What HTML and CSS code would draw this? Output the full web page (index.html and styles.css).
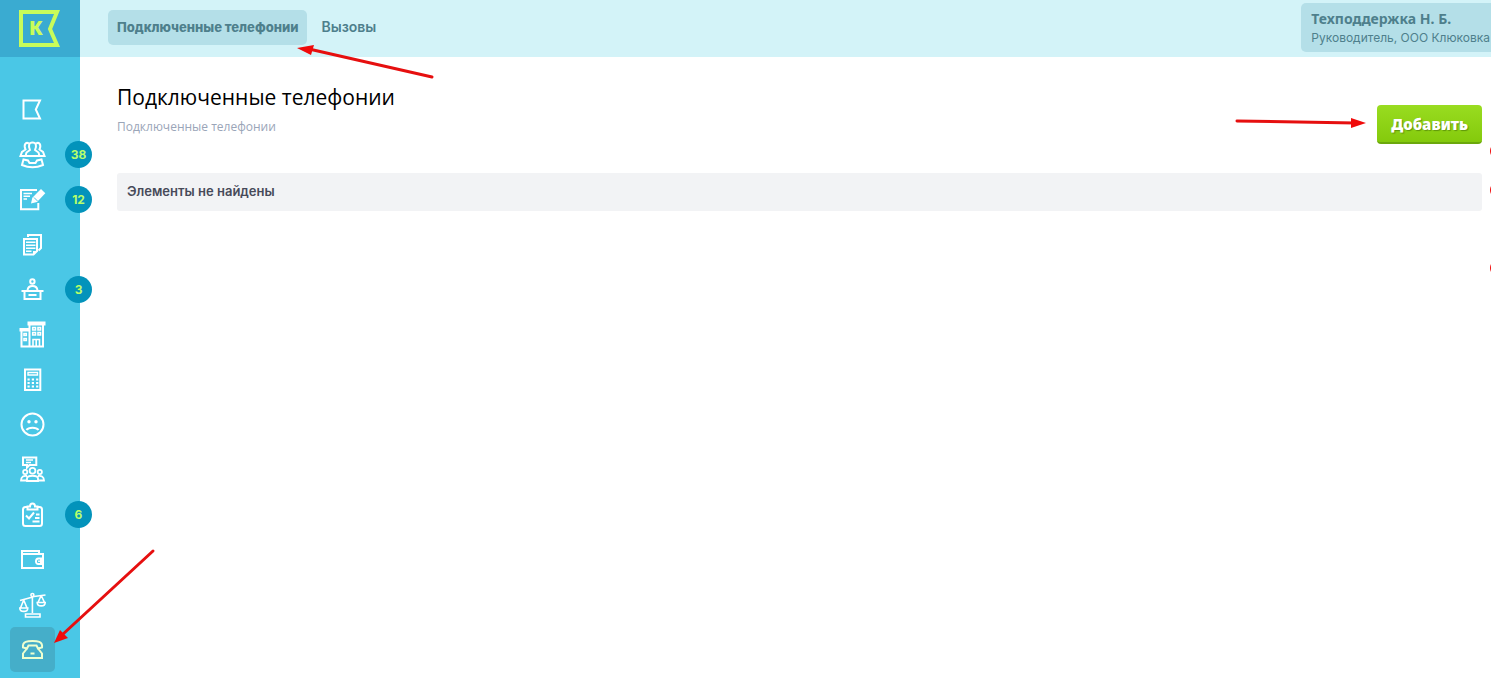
FILE: index.html
```
<!DOCTYPE html>
<html lang="ru">
<head>
  <meta charset="UTF-8" />
  <meta name="viewport" content="width=device-width, initial-scale=1.0"/>
  <title>Подключенные телефонии</title>
  <link rel="stylesheet" href="styles.css">
</head>
<body>
  <aside class="sidebar">
    <a href="#" class="logo" aria-label="Главная">
      <svg width="42" height="38" viewBox="0 0 42 38">
        <path d="M2 2H38L31 19L38 35H2Z" fill="none" stroke="#c8fc5a" stroke-width="4"/>
        <text x="10" y="25" class="logo-letter">К</text>
      </svg>
    </a>
    <nav class="menu">
      <a href="#" class="menu-item" aria-label="Дела">
        <svg viewBox="0 0 45 45"><path d="M13.5 13.5H30L25.8 22.5L30 31.5H13.5Z"/></svg>
      </a>
      <a href="#" class="menu-item" aria-label="Клиенты">
        <svg viewBox="0 0 45 45">
          <path d="M20 18C18 13 19 10.5 22.500 10.5S27 13 25 18L28.5 20.5L29.5 24H15.5L16.5 20.5Z"/>
          <path d="M19 11.5C15.5 9.5 13.5 13 15.5 17.5L12 20L10.5 24H16M26 11.5C29.5 9.5 31.5 13 29.5 17.5L33 20L34.5 24H29"/>
          <path d="M13.500 27.5L18 28.5L19.500 31H25.5L27 28.5L31.5 27.5L33 33C26 36 19 36 12 33Z"/>
        </svg>
        <span class="badge">38</span>
      </a>
      <a href="#" class="menu-item" aria-label="Заявки">
        <svg viewBox="0 0 45 45">
          <path d="M27 13H11V32.3H28.3V26"/>
          <path d="M13.5 16.5H22M13.5 19.3H20M13.5 22H17" stroke-width="1.4"/>
          <path class="solid" d="M21 26.5L22.3 20.8L31 12L35.3 16.2L27 25Z"/>
          <path d="M24 20.5L27.5 24" stroke="#4ac7e6" stroke-width="1"/>
        </svg>
        <span class="badge">12</span>
      </a>
      <a href="#" class="menu-item" aria-label="Документы">
        <svg viewBox="0 0 45 45">
          <path d="M18 15V13H31V26L28.5 28.5"/>
          <path d="M14 17H27V29L23.5 32.5H14Z"/>
          <path d="M16 20.2H25.5M16 23.2H25.5M16 26.2H25.5M16 29.2H21.5" stroke-width="1.4"/>
          <path class="solid" d="M23 33V29H27.5Z"/>
        </svg>
      </a>
      <a href="#" class="menu-item" aria-label="Приём">
        <svg viewBox="0 0 45 45">
          <circle cx="22.4" cy="14.5" r="2.2"/>
          <path d="M17.5 23.5C18 17.5 27 17.5 27.5 23.5M11.5 24H33.5M14.5 24V32H30.5V24M18.5 28H26.5"/>
        </svg>
        <span class="badge">3</span>
      </a>
      <a href="#" class="menu-item" aria-label="Организации">
        <svg viewBox="0 0 45 45">
          <path d="M18.5 10.5H34.5V12.5H18.5ZM19.5 12.5V34.5H33V12.5M10.5 17H19V18.5H10.5ZM11.5 18.5V34.5H20"/>
          <path d="M22.7 15.5H25.5V18H22.7ZM28 15.5H30.5V18H28ZM22.7 20.5H25.5V23H22.7ZM28 20.5H30.5V23H28ZM14 21.5H16.3V23.5H14ZM14 26.5H16.3V28.5H14ZM23 34V27.5H29.5V34M26.2 27.5V34" stroke-width="1.6"/>
        </svg>
      </a>
      <a href="#" class="menu-item" aria-label="Калькулятор">
        <svg viewBox="0 0 45 45">
          <path d="M15 12.5H30.3V33H15Z"/>
          <path d="M18 15.5H27.5V18H18Z" stroke-width="1.4"/>
          <path d="M17.5 22.5H28.5M17.5 26H28.5M17.5 29.5H28.5" stroke-dasharray="2.2 2.1"/>
        </svg>
      </a>
      <a href="#" class="menu-item" aria-label="Жалобы">
        <svg viewBox="0 0 45 45">
          <circle cx="22.5" cy="22.5" r="11"/>
          <circle class="solid" cx="19" cy="19.8" r="1.7"/>
          <circle class="solid" cx="26" cy="19.8" r="1.7"/>
          <path d="M16.5 28C18.5 25 26.5 25 28.5 28"/>
        </svg>
      </a>
      <a href="#" class="menu-item" aria-label="Собрания">
        <svg viewBox="0 0 45 45">
          <path d="M13 10.5H26.3V18H19.5L17 20.5V18H13Z"/>
          <path d="M16 13H23M16 15.5H21" stroke-width="1.4"/>
          <g stroke-width="1.8">
            <circle cx="22.5" cy="23.8" r="2.9"/>
            <circle cx="15.2" cy="25" r="2.1"/>
            <circle cx="29.8" cy="25" r="2.1"/>
            <path d="M17 34V31.5C17 27.8 28 27.8 28 31.5V34ZM17 29C14 28.5 11 29.5 11 33.5H17M28 29C31 28.5 34 29.5 34 33.5H28"/>
          </g>
        </svg>
      </a>
      <a href="#" class="menu-item" aria-label="Задачи">
        <svg viewBox="0 0 45 45">
          <path d="M17 15H15.5Q13 15 13 17.5V31.5Q13 34 15.5 34H29.5Q32 34 32 31.5V17.5Q32 15 29.5 15H28"/>
          <path d="M17.5 17.5V14.5H20C20 10.5 25 10.5 25 14.5H27.5V17.5Z"/>
          <path d="M16 23.5L19 26.5L24 20.5M26 22.5H29.5M25 26H29.5M22.5 29.5H29.5"/>
        </svg>
        <span class="badge">6</span>
      </a>
      <a href="#" class="menu-item" aria-label="Кошелёк">
        <svg viewBox="0 0 45 45">
          <path d="M29 16.8V14H12V31H33V17H12M33 21.5H28.5Q26 21.5 26 24.3T28.5 27H33M31 22V27"/>
          <circle class="solid" cx="29" cy="24.3" r="1"/>
        </svg>
      </a>
      <a href="#" class="menu-item" aria-label="Суд">
        <svg viewBox="0 0 45 45">
          <g stroke-width="1.6">
            <circle cx="22.4" cy="13" r="1.5"/>
            <path d="M22.4 14.5V31M10 18.5L21 15.5L24 14.5L35.5 13M15.5 32H30V35H15.5Z"/>
            <path d="M13.7 18L10.5 26H17L13.7 18M9.8 26H17.8C17.8 30.5 9.8 30.5 9.8 26ZM31.2 13.5L28 20.5H34.5L31.2 13.5M27.2 20.5H35.2C35.2 25 27.2 25 27.2 20.5Z"/>
          </g>
        </svg>
      </a>
      <a href="#" class="menu-item active" aria-label="Телефония">
        <svg viewBox="0 0 45 45">
          <path d="M13 20.5C12 14 18 14 22.5 14S33 14 32 20.5L28 21.5L26.5 18.5H18.5L17 21.5ZM17 21.5L13 26.5V31H32V26.5L28 21.5M20.5 26.5H24.5"/>
        </svg>
      </a>
    </nav>
  </aside>

  <div class="main">
    <header class="topbar">
      <nav class="tabs">
        <a href="#" class="tab active">Подключенные телефонии</a>
        <a href="#" class="tab">Вызовы</a>
      </nav>
      <a href="#" class="profile">
        <strong class="profile-name">Техподдержка Н. Б.</strong>
        <span class="profile-role">Руководитель, ООО Клюковка</span>
      </a>
    </header>

    <main class="content">
      <div class="page-head">
        <div>
          <h1>Подключенные телефонии</h1>
          <p class="crumbs">Подключенные телефонии</p>
        </div>
        <button type="button" class="btn-add">Добавить</button>
      </div>
      <div class="empty">Элементы не найдены</div>
    </main>
  </div>

  <!-- стрелки-подсказки -->
  <svg class="hint hint-tab" width="140" height="36" viewBox="0 0 140 36">
    <path d="M12 4L135 32" /><path class="tip" d="M0 3L17 0L14 10Z"/>
  </svg>
  <svg class="hint hint-phone" width="102" height="96" viewBox="0 0 102 96">
    <path d="M8 87L99 3" /><path class="tip" d="M0 95L6 82L14 90Z"/>
  </svg>
  <svg class="hint hint-add" width="132" height="12" viewBox="0 0 132 12">
    <path d="M2 4L120 6" /><path class="tip" d="M131 6L116 1V11Z"/>
  </svg>
  <svg class="hint hint-edge" width="2" height="126" viewBox="0 0 2 126">
    <path class="tip" d="M2 1Q0 5 2 9ZM2 40Q0 44 2 48ZM2 118Q0 122 2 126Z"/>
  </svg>
</body>
</html>
```
FILE: styles.css
```
* {
  box-sizing: border-box;
}

body {
  display: flex;
  position: relative;
  min-height: 100vh;
  margin: 0;
  font-family: "Open Sans", "Noto Sans", sans-serif;
  font-size: 13px;
  background: #fff;
  color: #000;
}

a {
  color: inherit;
  text-decoration: none;
}

/* Боковое меню */
.sidebar {
  flex: none;
  width: 80px;
  background: #4ac7e6;
}

.logo {
  display: flex;
  align-items: center;
  justify-content: center;
  height: 57px;
  background: #3aabd1;
}

.logo-letter {
  font-family: "Noto Sans", sans-serif;
  font-size: 19px;
  font-weight: 900;
  fill: #c8fc5a;
}

.menu {
  padding: 30px 10px 6px;
}

.menu-item {
  display: block;
  position: relative;
  width: 45px;
  height: 45px;
  border-radius: 5px;
  color: #fff;
}

.menu-item svg {
  display: block;
  width: 45px;
  height: 45px;
  fill: none;
  stroke: currentColor;
  stroke-width: 2;
}

.menu-item .solid {
  fill: currentColor;
  stroke: none;
}

.menu-item.active {
  background: #45aec9;
  color: #eeffd0;
}

.badge {
  position: absolute;
  top: 9px;
  left: 55px;
  width: 27px;
  height: 27px;
  border-radius: 50%;
  background: #0393bb;
  color: #b8ff6a;
  font-family: Inter, sans-serif;
  font-size: 12px;
  font-weight: 700;
  line-height: 27px;
  text-align: center;
}

/* Верхняя панель */
.main {
  flex: 1;
  min-width: 0;
}

.topbar {
  display: flex;
  align-items: flex-start;
  justify-content: space-between;
  height: 57px;
  padding-left: 28px;
  background: #d3f3f8;
  color: #4e7f8c;
}

.tabs {
  display: flex;
  gap: 5px;
  padding-top: 10px;
}

.tab {
  padding: 0 9px;
  border-radius: 5px;
  font-family: Inter, sans-serif;
  font-size: 14px;
  font-weight: 600;
  line-height: 34px;
}

.tab.active {
  background: #b4dfe8;
  font-size: 13px;
  font-weight: 800;
  line-height: 35px;
}

.profile {
  display: flex;
  flex-direction: column;
  margin-top: 3px;
  padding: 6px 1px 5px 10px;
  border-radius: 5px 0 0 5px;
  background: #b4dfe8;
  line-height: 19px;
}

.profile-name {
  font-family: "Noto Sans", sans-serif;
  font-size: 14px;
}

.profile-role {
  font-family: Inter, sans-serif;
  font-size: 12px;
}

/* Содержимое */
.content {
  padding: 24px 9px 24px 37px;
}

.page-head {
  display: flex;
  align-items: flex-start;
  justify-content: space-between;
  margin-bottom: 29px;
}

h1 {
  margin: 0;
  font-size: 21px;
  font-weight: 400;
  line-height: 32px;
}

.crumbs {
  margin: 4px 0 0;
  color: #9aa5b8;
  font-size: 12px;
  line-height: 20px;
}

.btn-add {
  height: 39px;
  margin-top: 24px;
  padding: 0 14px;
  border: none;
  border-bottom: 2px solid #6ba80c;
  border-radius: 4px;
  background: linear-gradient(#99dc20, #84ca0c);
  color: #fff;
  font-family: "Noto Sans", sans-serif;
  font-size: 15px;
  font-weight: 900;
  text-shadow: 1px 1px 1px #5f960b;
  cursor: pointer;
}

.empty {
  padding: 0 10px 1px;
  border-radius: 3px;
  background: #f2f3f5;
  color: #474a59;
  font-family: Inter, sans-serif;
  font-weight: 600;
  line-height: 37px;
}

/* Стрелки поверх страницы */
.hint {
  position: absolute;
  fill: none;
  stroke: #e60f0f;
  stroke-width: 3;
  stroke-linecap: round;
  pointer-events: none;
}

.hint .tip {
  fill: #f00a0a;
  stroke: none;
}

.hint-tab {
  top: 45px;
  left: 297px;
}

.hint-phone {
  top: 548px;
  left: 54px;
}

.hint-add {
  top: 117px;
  right: 124px;
}

.hint-edge {
  top: 146px;
  right: 0;
}
```
